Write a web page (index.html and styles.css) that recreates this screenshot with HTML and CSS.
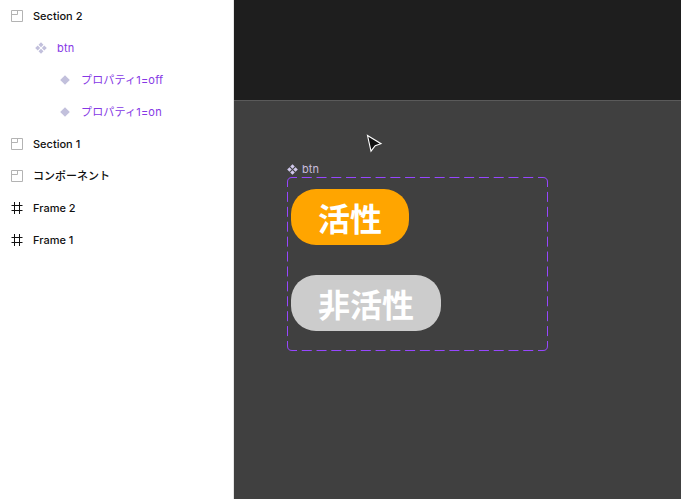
FILE: index.html
```html
<!DOCTYPE html>
<html lang="ja">
<head>
<meta charset="utf-8">
<title>Layers</title>
<link rel="stylesheet" href="styles.css">
</head>
<body>
<svg class="defs" width="0" height="0">
  <symbol id="section" viewBox="0 0 12 12"><path d="M.5.5h11v11H.5zM.5 4.500h6v-4" fill="none" stroke="currentColor"/></symbol>
  <symbol id="frame" viewBox="0 0 12 12"><path d="M3.500 0v12M8.500 0v12M.5 3.500h11M.5 8.500h11" fill="none" stroke="currentColor"/></symbol>
  <symbol id="set" viewBox="0 0 12 12"><path d="M6 .2 8.500 2.700 6 5.200 3.500 2.700zM6 6.800l2.500 2.500L6 11.800 3.500 9.300zM2.700 3.500 5.200 6 2.700 8.500.2 6zM9.300 3.500 11.800 6 9.300 8.500 6.800 6z" fill="currentColor"/></symbol>
  <symbol id="variant" viewBox="0 0 12 12"><path d="M6 1.200 10.800 6 6 10.800 1.200 6z" fill="currentColor"/></symbol>
</svg>
<div class="app">
  <ul class="layers">
    <li class="row"><svg class="icon muted"><use href="#section"/></svg><span>Section 2</span></li>
    <li class="row component level-1"><svg class="icon"><use href="#set"/></svg><span>btn</span></li>
    <li class="row component level-2"><svg class="icon"><use href="#variant"/></svg><span>プロパティ1=off</span></li>
    <li class="row component level-2"><svg class="icon"><use href="#variant"/></svg><span>プロパティ1=on</span></li>
    <li class="row"><svg class="icon muted"><use href="#section"/></svg><span>Section 1</span></li>
    <li class="row"><svg class="icon muted"><use href="#section"/></svg><span>コンポーネント</span></li>
    <li class="row"><svg class="icon"><use href="#frame"/></svg><span>Frame 2</span></li>
    <li class="row"><svg class="icon"><use href="#frame"/></svg><span>Frame 1</span></li>
  </ul>
  <main class="canvas">
    <div class="section">
      <div class="set">
        <div class="set-label"><svg class="set-icon"><use href="#set"/></svg><span>btn</span></div>
        <div class="set-frame">
          <svg class="outline" width="261" height="174" viewBox="0 0 261 174" fill="none" stroke="#9747ff">
            <path class="dash-x" d="M5 .5h251M5 173.500h251"/>
            <path class="dash-y" d="M.5 5v164M260.500 5v164"/>
            <path d="M.5 5Q.5.5 5 .5M256 .5q4.500 0 4.500 4.500M260.500 169q0 4.500-4.500 4.500M5 173.500q-4.500 0-4.500-4.500"/>
          </svg>
          <div class="pill on">活性</div>
          <div class="pill off">非活性</div>
        </div>
      </div>
      <svg class="cursor" width="20" height="22" viewBox="0 0 20 22"><path d="M2.500 2.500 16 10.700 10.200 12.700 6 18.200z" fill="#111" stroke="#fff" stroke-width="1.100"/></svg>
    </div>
  </main>
</div>
</body>
</html>
```
FILE: styles.css
```css
* { box-sizing: border-box; }
body { margin: 0; font: 500 11px/16px Inter, "Noto Sans CJK JP", sans-serif; color: #111; }
.defs { position: absolute; }
.app { display: grid; grid-template-columns: 234px 1fr; height: 499px; overflow: hidden; }
.layers { margin: 0; padding: 0; list-style: none; background: #fff; border-right: 1px solid #e5e5e5; }
.row { display: flex; align-items: center; gap: 10px; height: 32px; padding-left: 11px; white-space: nowrap; }
.icon { width: 12px; height: 12px; flex: none; }
.muted { color: #b3b3b3; }
.component { color: #8638e5; font-weight: 400; letter-spacing: .18px; }
.component .icon { color: #c2c0dc; }
.level-1 { padding-left: 35px; }
.level-2 { padding-left: 59px; }
.canvas { padding-top: 100px; background: #1e1e1e; }
.section { position: relative; height: 399px; background: #404040; border-top: 1px solid #5a5a5a; }
.set { position: absolute; left: 53px; top: 60px; width: 261px; }
.set-label { display: flex; align-items: center; gap: 4px; height: 16px; color: #c9bddd; font-weight: 400; letter-spacing: .1px; }
.set-icon { width: 11px; height: 11px; color: #d1c8ec; }
.set-frame { position: relative; display: flex; flex-direction: column; align-items: flex-start; gap: 30px; height: 174px; padding: 12px 4px; }
.outline { position: absolute; left: 0; top: 0; }
.dash-x { stroke-dasharray: 10 4.765; stroke-dashoffset: 5; }
.dash-y { stroke-dasharray: 10 4.909; stroke-dashoffset: 5; }
.pill { height: 56px; padding: 0 27px; border-radius: 25px; color: #fff; font: 700 32px/56px "Noto Sans CJK JP", sans-serif; }
.on { background: #ffa500; }
.off { background: #ccc; }
.cursor { position: absolute; left: 131px; top: 32px; }
```
